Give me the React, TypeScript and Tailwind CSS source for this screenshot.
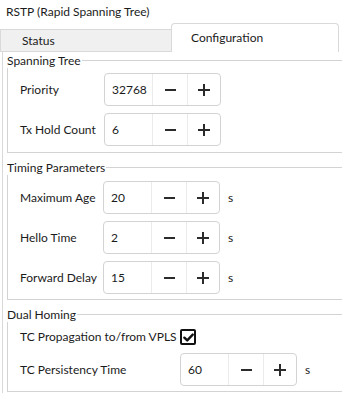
function Spin({ value }: { value: string }) {
  return (
    <div className="flex h-[33px] w-[117px] shrink-0 rounded-[4px] border border-[#d3d3d3] bg-white">
      <div className="flex w-[47px] items-center pl-[7px]">{value}</div>
      <div className="flex w-[35px] items-center justify-center border-l border-[#ebebeb]">
        <span className="block h-[2px] w-[11px] bg-[#2b2b2b]" />
      </div>
      <div className="relative flex w-[33px] items-center justify-center border-l border-[#ebebeb]">
        <span className="block h-[2px] w-[12px] bg-[#2b2b2b]" />
        <span className="absolute block h-[12px] w-[2px] bg-[#2b2b2b]" />
      </div>
    </div>
  )
}

function Row({ label, value, unit, labelW = 'w-[84px]' }: { label: string; value: string; unit?: boolean; labelW?: string }) {
  return (
    <div className="flex h-[33px] items-center">
      <div className={`${labelW} shrink-0 whitespace-nowrap`}>{label}</div>
      <Spin value={value} />
      {unit && <span className="ml-[8px]">s</span>}
    </div>
  )
}

function Group({ title, className, children }: { title: string; className: string; children: React.ReactNode }) {
  return (
    <section className={`relative ml-[4px] border-y border-l border-[#d3d3d3] pl-[12px] ${className}`}>
      <div className="absolute -left-px -top-[8px] whitespace-nowrap bg-white pr-px leading-[15px]">{title}</div>
      {children}
    </section>
  )
}

export default function App() {
  return (
    <div
      className="h-[393px] w-[342px] overflow-hidden bg-white text-[12px] text-[#1b1b1b]"
      style={{ fontFamily: 'Lato, "Open Sans", sans-serif' }}
    >
      <div className="flex h-[23px] items-center pl-[6px]">RSTP (Rapid Spanning Tree)</div>

      {/* Tabs */}
      <div className="flex h-[29px] items-end">
        <div className="flex h-[23px] w-[171px] items-center border-b border-l border-t border-[#d9d9d9] bg-[#f0f0f0] pl-[21px] pt-[1px]">
          Status
        </div>
        <div className="flex h-[29px] w-[168px] items-center rounded-t-[4px] border-x border-t border-[#d9d9d9] bg-white pb-[1px] pl-[19px]">
          Configuration
        </div>
      </div>

      {/* Panel */}
      <div className="ml-[2px] h-[400px] border-l border-[#d9d9d9] pt-[8px]">
        <Group title="Spanning Tree" className="pb-[6px] pt-[12px]">
          <div className="flex flex-col gap-[7px]">
            <Row label="Priority" value="32768" />
            <Row label="Tx Hold Count" value="6" />
          </div>
        </Group>

        <Group title="Timing Parameters" className="mt-[14px] pb-[5px] pt-[13px]">
          <div className="flex flex-col gap-[7px]">
            <Row label="Maximum Age" value="20" unit labelW="w-[83px]" />
            <Row label="Hello Time" value="2" unit labelW="w-[83px]" />
            <Row label="Forward Delay" value="15" unit labelW="w-[83px]" />
          </div>
        </Group>

        <Group title="Dual Homing" className="mt-[14px] pb-[5px] pt-[10px]">
          <div className="flex h-[24px] items-center">
            <div className="w-[160px] shrink-0 whitespace-nowrap">TC Propagation to/from VPLS</div>
            <span className="flex h-[16px] w-[16px] items-center justify-center rounded-[2px] border-2 border-[#111] bg-white">
              <svg viewBox="0 0 12 12" className="h-[11px] w-[11px]">
                <path d="M1.5 6.2 L4.6 9.2 L10.6 2.8" fill="none" stroke="#111" strokeWidth="2.6" strokeLinecap="round" strokeLinejoin="round" />
              </svg>
            </span>
          </div>
          <div className="mt-[4px]">
            <Row label="TC Persistency Time" value="60" unit labelW="w-[160px]" />
          </div>
        </Group>
      </div>
    </div>
  )
}
